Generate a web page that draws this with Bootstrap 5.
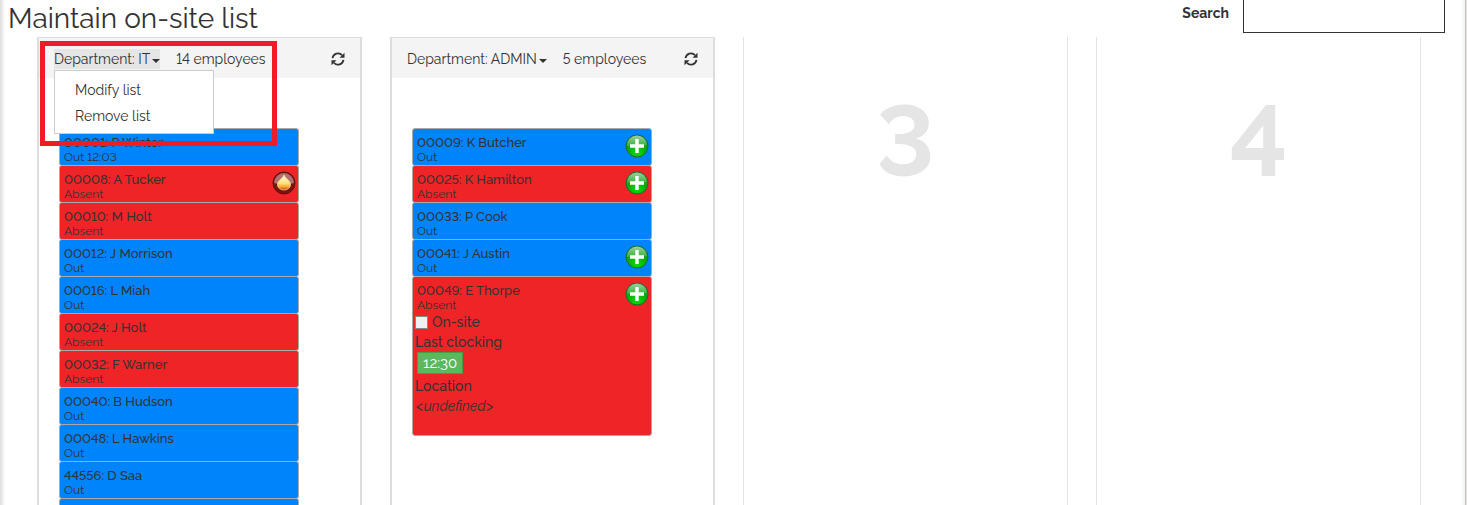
<!DOCTYPE html>
<html lang="en">
<head>
<meta charset="utf-8">
<meta name="viewport" content="width=device-width, initial-scale=1">
<title>Maintain on-site list</title>
<link href="https://cdn.jsdelivr.net/npm/bootstrap@5.3.0/dist/css/bootstrap.min.css" rel="stylesheet">
<style>
  body { font-family: Raleway, Lato, "Open Sans", sans-serif; font-size: 14px; line-height: 20px; color: #333; font-variant-numeric: lining-nums; background: #e6dede; }
  .page { border-right: 1px solid #c8c8c8; margin-right: 1px; background: linear-gradient(90deg, #ddd, #fff 5px, #fff calc(100% - 4px), #f0f0f0); }
  .top-bar { height: 37px; padding-left: 8px; }
  .page-title { font-size: 28px; line-height: 38px; font-weight: 400; }
  .search-label { font-weight: 700; font-size: 14px; line-height: 26px; margin-right: 14px; }
  .search-box { width: 202px; height: 33px; border: 1px solid #333; border-top: 0; }
  .board { display: grid; grid-template-columns: repeat(4, minmax(0, 1fr)); gap: 28px; padding: 0 44px 0 37px; }
  .slot { border: solid #e3e3e3; border-width: 0 1px; }
  .slot-number { font-size: 100px; line-height: 100px; font-weight: 700; color: #e5e5e5; padding-top: 54px; }
  .dept { border: 2px solid #ddd; border-top-width: 1px; border-bottom: 0; }
  .dept-head { background: #f4f4f4; height: 40px; padding: 2px 15px 0; margin-bottom: 50px; }
  .dept-toggle { line-height: 20px; color: #333; }
  .dept-toggle::after { margin-left: 2px; vertical-align: 1px; border-width: 4px 4px 0; }
  .dept-toggle.show { background: #e5e5e5; }
  .dept-menu { top: 32px; left: 15px; width: 160px; padding: 6px 0 4px; border: 1px solid #ccc; border-radius: 0; font-size: 14px; }
  .dept-menu .dropdown-item { padding: 3px 20px; line-height: 20px; color: #333; }
  .callout { top: 3px; left: 1px; width: 237px; height: 105px; border: 5px solid #ee1c25; z-index: 1100; pointer-events: none; }
  .people { width: 240px; max-width: 90%; margin-left: 20px; }
  .person { border: 1px solid #aaa; border-radius: 3px; padding: 7px 4px 1px; min-height: 38px; margin-bottom: -1px; line-height: 14px; }
  .person.is-out { background: #0084fb; }
  .person.is-absent { background: #ef2426; }
  .person-name { font-size: 13px; font-weight: 500; }
  .person-state { font-size: 12px; }
  .person-icon { top: 5px; right: 2px; }
  .details { line-height: 20px; padding-bottom: 18px; margin-left: -2px; font-weight: 500; }
  .location { font-weight: 400; font-style: italic; padding-left: 1px; }
  .onsite-box { appearance: none; width: 13px; height: 13px; background: #f0f0f0; border: 1px solid #888; margin: 0 4px 0 0; }
  .clock-btn { font-size: 15px; line-height: 20px; padding: 0 5px; border: 1px solid #4a9a4a; border-radius: 0; background: #5cb85c; color: #fff; margin: 0 0 2px 2px; }
</style>
</head>
<body>
<svg width="0" height="0" class="position-absolute" aria-hidden="true">
  <defs>
    <radialGradient id="green" cx=".5" cy=".8" r=".8"><stop offset="0" stop-color="#0be00b"/><stop offset=".5" stop-color="#05ad0a"/><stop offset="1" stop-color="#2f8f2f"/></radialGradient>
    <linearGradient id="gloss" x2="0" y2="1"><stop offset="0" stop-color="#fff" stop-opacity=".55"/><stop offset="1" stop-color="#fff" stop-opacity=".15"/></linearGradient>
    <linearGradient id="flame" x2="0" y2="1"><stop offset="0" stop-color="#fffbe0"/><stop offset=".55" stop-color="#fbe27a"/><stop offset=".8" stop-color="#f5a52c"/><stop offset="1" stop-color="#d42a10"/></linearGradient>
    <symbol id="plus" viewBox="0 0 24 24"><circle cx="12" cy="12" r="11" fill="url(#green)" stroke="#14702a"/><path d="M2 12a10 10 0 0 1 20-1q-10-1-20 1z" fill="url(#gloss)"/><path d="M10.300 5h3.400v5.300H19v3.400h-5.300V19h-3.400v-5.300H5v-3.400h5.300z" fill="#fff"/></symbol>
    <symbol id="fire" viewBox="0 0 24 24"><circle cx="12" cy="12" r="11" fill="#7a1410" stroke="#5f0f0c"/><path d="M2 12a10 10 0 0 1 20 0q-10 3-20 0z" fill="#fff" opacity=".4"/><path d="M12 4c1 3 6.500 6 6.500 9.500a6.500 5.500 0 0 1-13 0c0-3.500 5.500-6.500 6.500-9.500z" fill="url(#flame)" stroke="#f6dca0" stroke-width=".8"/></symbol>
    <symbol id="refresh" viewBox="0 0 14 14"><path d="M1.500 6.200A5.500 5.500 0 0 1 11 3.200M12.500 7.800A5.500 5.500 0 0 1 3 10.800" fill="none" stroke="#333" stroke-width="1.800"/><path d="M13.500 .8v5h-5zM.5 13.200v-5h5z" fill="#333"/></symbol>
  </defs>
</svg>
<div class="page vh-100 d-flex flex-column overflow-hidden">
  <header class="top-bar d-flex justify-content-between align-items-start flex-shrink-0">
    <h1 class="page-title m-0">Maintain on-site list</h1>
    <div class="d-flex align-items-start me-3 pe-1">
      <label class="search-label" for="search">Search</label>
      <input class="search-box" id="search" type="text">
    </div>
  </header>
  <main class="board flex-fill overflow-hidden">
    <section class="dept position-relative">
      <div class="dept-head d-flex align-items-center">
        <button class="dept-toggle dropdown-toggle show border-0 p-0" type="button" aria-expanded="true">Department: IT</button>
        <span class="ms-3">14 employees</span>
        <button class="border-0 bg-transparent p-0 ms-auto d-flex" type="button" aria-label="Refresh"><svg width="14" height="14"><use href="#refresh"/></svg></button>
      </div>
      <ul class="dropdown-menu dept-menu show">
        <li><a class="dropdown-item" href="#">Modify list</a></li>
        <li><a class="dropdown-item" href="#">Remove list</a></li>
      </ul>
      <div class="callout position-absolute"></div>
      <ul class="people list-unstyled">
        <li class="person is-out"><div class="person-name">00001: P Winter</div><div class="person-state">Out 12:03</div></li>
        <li class="person is-absent position-relative"><div class="person-name">00008: A Tucker</div><div class="person-state">Absent</div><svg class="person-icon position-absolute" width="24" height="24"><use href="#fire"/></svg></li>
        <li class="person is-absent"><div class="person-name">00010: M Holt</div><div class="person-state">Absent</div></li>
        <li class="person is-out"><div class="person-name">00012: J Morrison</div><div class="person-state">Out</div></li>
        <li class="person is-out"><div class="person-name">00016: L Miah</div><div class="person-state">Out</div></li>
        <li class="person is-absent"><div class="person-name">00024: J Holt</div><div class="person-state">Absent</div></li>
        <li class="person is-absent"><div class="person-name">00032: F Warner</div><div class="person-state">Absent</div></li>
        <li class="person is-out"><div class="person-name">00040: B Hudson</div><div class="person-state">Out</div></li>
        <li class="person is-out"><div class="person-name">00048: L Hawkins</div><div class="person-state">Out</div></li>
        <li class="person is-out"><div class="person-name">44556: D Saa</div><div class="person-state">Out</div></li>
        <li class="person is-out"></li>
      </ul>
    </section>
    <section class="dept">
      <div class="dept-head d-flex align-items-center">
        <button class="dept-toggle dropdown-toggle border-0 bg-transparent p-0" type="button" aria-expanded="false">Department: ADMIN</button>
        <span class="ms-3">5 employees</span>
        <button class="border-0 bg-transparent p-0 ms-auto d-flex" type="button" aria-label="Refresh"><svg width="14" height="14"><use href="#refresh"/></svg></button>
      </div>
      <ul class="people list-unstyled">
        <li class="person is-out position-relative"><div class="person-name">00009: K Butcher</div><div class="person-state">Out</div><svg class="person-icon position-absolute" width="24" height="24"><use href="#plus"/></svg></li>
        <li class="person is-absent position-relative"><div class="person-name">00025: K Hamilton</div><div class="person-state">Absent</div><svg class="person-icon position-absolute" width="24" height="24"><use href="#plus"/></svg></li>
        <li class="person is-out position-relative"><div class="person-name">00033: P Cook</div><div class="person-state">Out</div></li>
        <li class="person is-out position-relative"><div class="person-name">00041: J Austin</div><div class="person-state">Out</div><svg class="person-icon position-absolute" width="24" height="24"><use href="#plus"/></svg></li>
        <li class="person is-absent position-relative"><div class="person-name">00049: E Thorpe</div><div class="person-state">Absent</div><svg class="person-icon position-absolute" width="24" height="24"><use href="#plus"/></svg>
          <div class="details">
            <div class="d-flex align-items-center"><input class="onsite-box" type="checkbox" id="onsite"><label for="onsite">On-site</label></div>
            <div>Last clocking</div>
            <button class="clock-btn d-block" type="button">12:30</button>
            <div>Location</div>
            <div class="location">&lt;undefined&gt;</div>
          </div>
        </li>
      </ul>
    </section>
    <section class="slot text-center"><div class="slot-number">3</div></section>
    <section class="slot text-center"><div class="slot-number">4</div></section>
  </main>
</div>
<script src="https://cdn.jsdelivr.net/npm/bootstrap@5.3.0/dist/js/bootstrap.bundle.min.js"></script>
</body>
</html>
